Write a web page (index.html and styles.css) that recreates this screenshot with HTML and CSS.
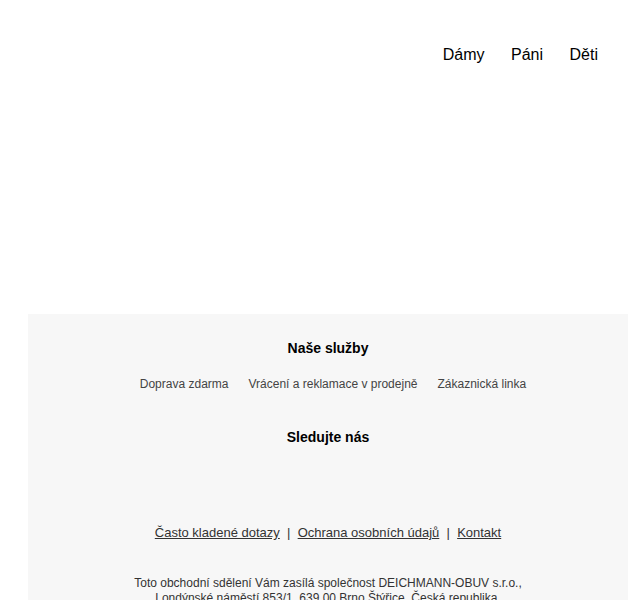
FILE: index.html
```html
<!DOCTYPE html>
<html lang="cs">
<head>
  <meta charset="UTF-8">
  <title>Deichmann</title>
  <link rel="stylesheet" href="styles.css">
</head>
<body>
  <div class="wrap">
    <div class="header">
      <nav class="nav">
        <a href="#">Dámy</a>
        <a href="#">Páni</a>
        <a href="#">Děti</a>
      </nav>
    </div>

    <div class="footer">
      <h3>Naše služby</h3>
      <div class="services">
        <a href="#">Doprava zdarma</a>
        <a href="#">Vrácení a reklamace v prodejně</a>
        <a href="#">Zákaznická linka</a>
      </div>

      <h3>Sledujte nás</h3>
      <div class="social"></div>

      <p class="links">
        <a href="#">Často kladené dotazy</a> &nbsp;|&nbsp; <a href="#">Ochrana osobních údajů</a> &nbsp;|&nbsp; <a href="#">Kontakt</a>
      </p>

      <p class="legal">
        Toto obchodní sdělení Vám zasílá společnost DEICHMANN-OBUV s.r.o.,<br>
        Londýnské náměstí 853/1, 639 00 Brno Štýřice, Česká republika.
      </p>
    </div>
  </div>
</body>
</html>
```

FILE: styles.css
```css
body { margin: 0; background: #fff; font-family: "Liberation Sans", Arial, sans-serif; color: #000; }
a { color: inherit; text-decoration: none; }
.wrap { width: 600px; margin-left: 28px; }
.header { height: 314px; }
.nav { display: flex; justify-content: flex-end; gap: 26.5px; padding: 46px 30px 0 0; font-size: 16px; }
.footer { background: #f7f7f7; text-align: center; padding: 26px 0 10px; }
.footer h3 { margin: 0; font-size: 14px; font-weight: bold; line-height: 16px; }
.services { display: flex; justify-content: center; gap: 20px; font-size: 12px; color: #444; margin: 21px 0 38px; padding-left: 10px; }
.social { height: 80px; }
.links { font-size: 13px; color: #333; margin: 0 0 36px; }
.links a { text-decoration: underline; }
.legal { font-size: 12px; color: #333; line-height: 15px; margin: 0; }
```
